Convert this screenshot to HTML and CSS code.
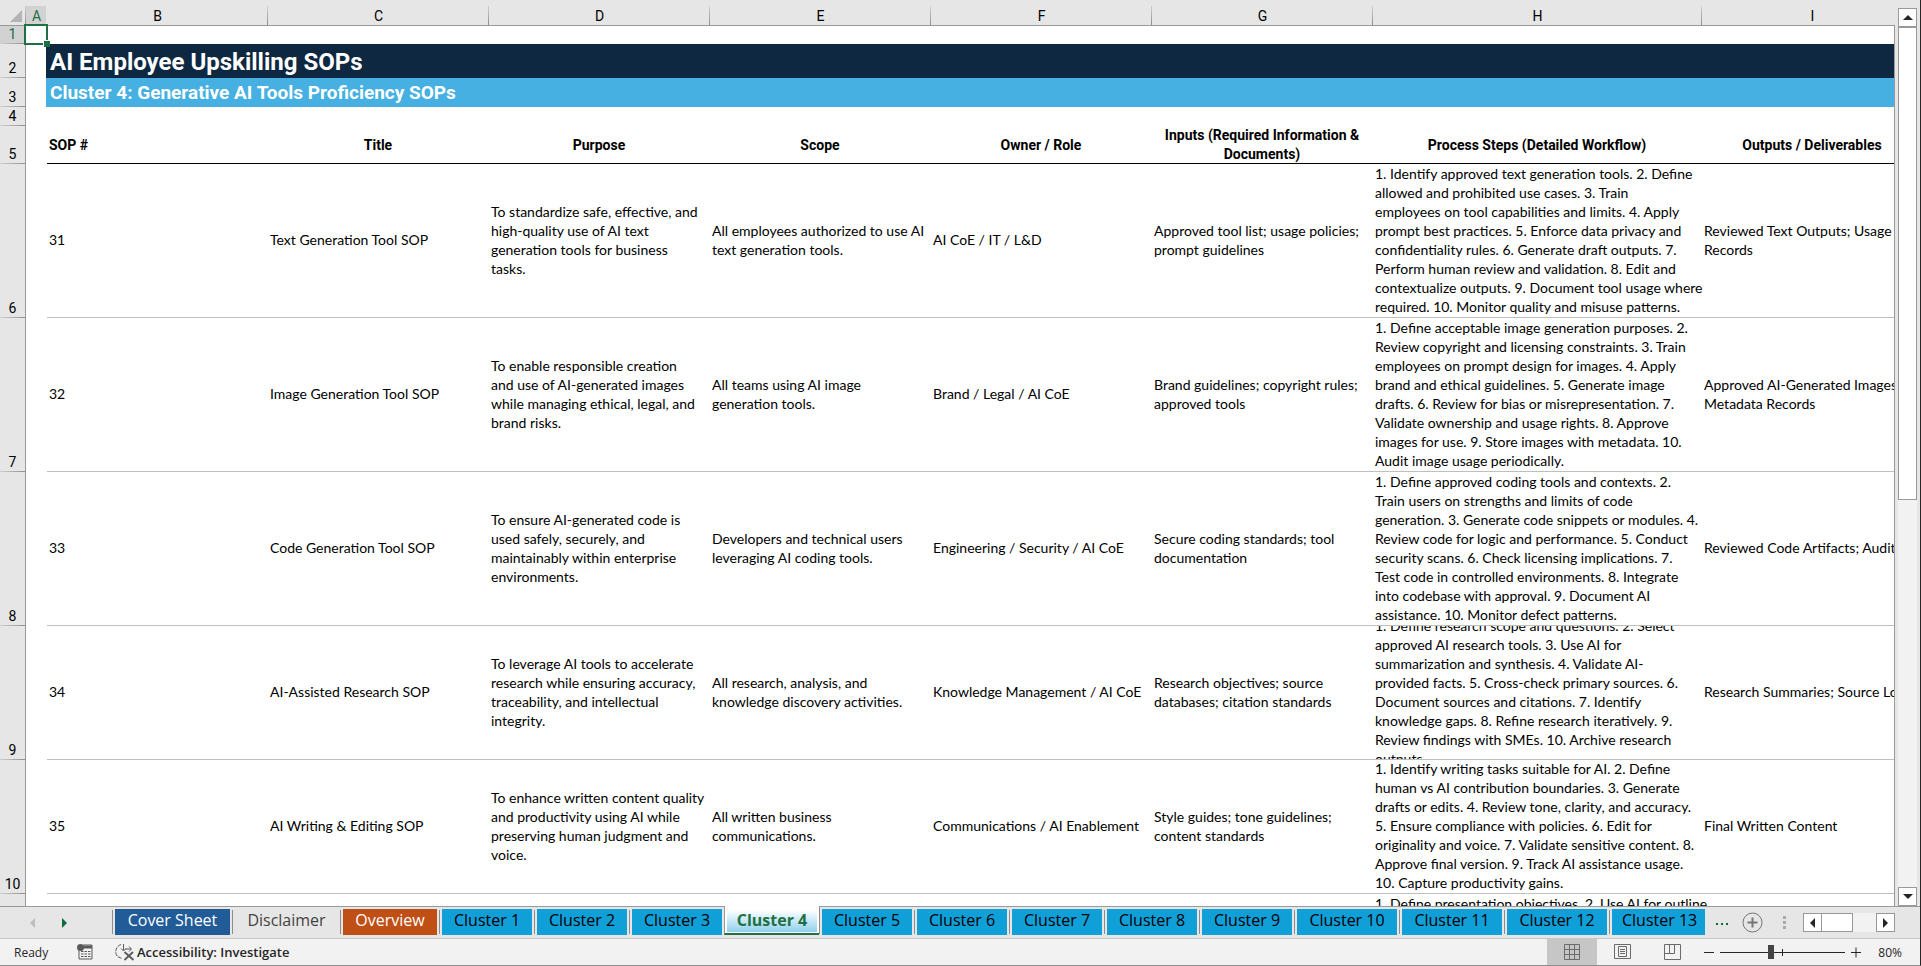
FILE: index.html
```html
<!DOCTYPE html>
<html lang="en">

<head>
    <meta charset="UTF-8">
    <meta name="viewport" content="width=device-width, initial-scale=1.0">
    <title>AI Employee Upskilling SOPs</title>

    <link rel="stylesheet" href="styles.css">
</head>

<body>
    <div class="workbook">
        <div class="main">
            <div class="sheet">
                <table class="grid">
                    <colgroup>
                        <col class="col-num">
                        <col class="col-a">
                        <col class="col-std">
                        <col class="col-std">
                        <col class="col-std">
                        <col class="col-std">
                        <col class="col-std">
                        <col class="col-std">
                        <col class="col-steps">
                        <col class="col-std">
                    </colgroup>
                    <thead>
                        <tr class="letters">
                            <th class="corner"><svg width="12" height="12" viewBox="0 0 12 12"><path d="M12 0v12H0z" fill="#b4b4b4"/></svg></th>
                            <th class="selected">A</th>
                            <th>B</th>
                            <th>C</th>
                            <th>D</th>
                            <th>E</th>
                            <th>F</th>
                            <th>G</th>
                            <th>H</th>
                            <th>I</th>
                        </tr>
                    </thead>
                    <tbody>
                        <tr class="row-1">
                            <th class="selected">1</th>
                            <td class="active-cell"></td>
                            <td colspan="8"></td>
                        </tr>
                        <tr class="row-title">
                            <th>2</th>
                            <td></td>
                            <td colspan="8">AI Employee Upskilling SOPs</td>
                        </tr>
                        <tr class="row-subtitle">
                            <th>3</th>
                            <td></td>
                            <td colspan="8">Cluster 4: Generative AI Tools Proficiency SOPs</td>
                        </tr>
                        <tr class="row-blank">
                            <th>4</th>
                            <td></td>
                            <td colspan="8"></td>
                        </tr>
                        <tr class="row-head">
                            <th>5</th>
                            <td></td>
                            <td class="first">SOP #</td>
                            <td>Title</td>
                            <td>Purpose</td>
                            <td>Scope</td>
                            <td>Owner / Role</td>
                            <td>Inputs (Required Information &amp;<br>Documents)</td>
                            <td>Process Steps (Detailed Workflow)</td>
                            <td>Outputs / Deliverables</td>
                        </tr>
                        <tr class="row-data tall">
                            <th>6</th>
                            <td></td>
                            <td><div class="cell">31</div></td>
                            <td><div class="cell">Text Generation Tool SOP</div></td>
                            <td><div class="cell">To standardize safe, effective, and<br>high-quality use of AI text<br>generation tools for business<br>tasks.</div></td>
                            <td><div class="cell">All employees authorized to use AI<br>text generation tools.</div></td>
                            <td><div class="cell">AI CoE / IT / L&amp;D</div></td>
                            <td><div class="cell">Approved tool list; usage policies;<br>prompt guidelines</div></td>
                            <td><div class="cell">1. Identify approved text generation tools. 2. Define<br>allowed and prohibited use cases. 3. Train<br>employees on tool capabilities and limits. 4. Apply<br>prompt best practices. 5. Enforce data privacy and<br>confidentiality rules. 6. Generate draft outputs. 7.<br>Perform human review and validation. 8. Edit and<br>contextualize outputs. 9. Document tool usage where<br>required. 10. Monitor quality and misuse patterns.</div></td>
                            <td><div class="cell">Reviewed Text Outputs; Usage<br>Records</div></td>
                        </tr>
                        <tr class="row-data tall">
                            <th>7</th>
                            <td></td>
                            <td><div class="cell">32</div></td>
                            <td><div class="cell">Image Generation Tool SOP</div></td>
                            <td><div class="cell">To enable responsible creation<br>and use of AI-generated images<br>while managing ethical, legal, and<br>brand risks.</div></td>
                            <td><div class="cell">All teams using AI image<br>generation tools.</div></td>
                            <td><div class="cell">Brand / Legal / AI CoE</div></td>
                            <td><div class="cell">Brand guidelines; copyright rules;<br>approved tools</div></td>
                            <td><div class="cell">1. Define acceptable image generation purposes. 2.<br>Review copyright and licensing constraints. 3. Train<br>employees on prompt design for images. 4. Apply<br>brand and ethical guidelines. 5. Generate image<br>drafts. 6. Review for bias or misrepresentation. 7.<br>Validate ownership and usage rights. 8. Approve<br>images for use. 9. Store images with metadata. 10.<br>Audit image usage periodically.</div></td>
                            <td><div class="cell">Approved AI-Generated Images;<br>Metadata Records</div></td>
                        </tr>
                        <tr class="row-data tall">
                            <th>8</th>
                            <td></td>
                            <td><div class="cell">33</div></td>
                            <td><div class="cell">Code Generation Tool SOP</div></td>
                            <td><div class="cell">To ensure AI-generated code is<br>used safely, securely, and<br>maintainably within enterprise<br>environments.</div></td>
                            <td><div class="cell">Developers and technical users<br>leveraging AI coding tools.</div></td>
                            <td><div class="cell">Engineering / Security / AI CoE</div></td>
                            <td><div class="cell">Secure coding standards; tool<br>documentation</div></td>
                            <td><div class="cell">1. Define approved coding tools and contexts. 2.<br>Train users on strengths and limits of code<br>generation. 3. Generate code snippets or modules. 4.<br>Review code for logic and performance. 5. Conduct<br>security scans. 6. Check licensing implications. 7.<br>Test code in controlled environments. 8. Integrate<br>into codebase with approval. 9. Document AI<br>assistance. 10. Monitor defect patterns.</div></td>
                            <td><div class="cell">Reviewed Code Artifacts; Audit Logs</div></td>
                        </tr>
                        <tr class="row-data short">
                            <th>9</th>
                            <td></td>
                            <td><div class="cell">34</div></td>
                            <td><div class="cell">AI-Assisted Research SOP</div></td>
                            <td><div class="cell">To leverage AI tools to accelerate<br>research while ensuring accuracy,<br>traceability, and intellectual<br>integrity.</div></td>
                            <td><div class="cell">All research, analysis, and<br>knowledge discovery activities.</div></td>
                            <td><div class="cell">Knowledge Management / AI CoE</div></td>
                            <td><div class="cell">Research objectives; source<br>databases; citation standards</div></td>
                            <td><div class="cell">1. Define research scope and questions. 2. Select<br>approved AI research tools. 3. Use AI for<br>summarization and synthesis. 4. Validate AI-<br>provided facts. 5. Cross-check primary sources. 6.<br>Document sources and citations. 7. Identify<br>knowledge gaps. 8. Refine research iteratively. 9.<br>Review findings with SMEs. 10. Archive research<br>outputs.</div></td>
                            <td><div class="cell">Research Summaries; Source Logs</div></td>
                        </tr>
                        <tr class="row-data short">
                            <th>10</th>
                            <td></td>
                            <td><div class="cell">35</div></td>
                            <td><div class="cell">AI Writing &amp; Editing SOP</div></td>
                            <td><div class="cell">To enhance written content quality<br>and productivity using AI while<br>preserving human judgment and<br>voice.</div></td>
                            <td><div class="cell">All written business<br>communications.</div></td>
                            <td><div class="cell">Communications / AI Enablement</div></td>
                            <td><div class="cell">Style guides; tone guidelines;<br>content standards</div></td>
                            <td><div class="cell">1. Identify writing tasks suitable for AI. 2. Define<br>human vs AI contribution boundaries. 3. Generate<br>drafts or edits. 4. Review tone, clarity, and accuracy.<br>5. Ensure compliance with policies. 6. Edit for<br>originality and voice. 7. Validate sensitive content. 8.<br>Approve final version. 9. Track AI assistance usage.<br>10. Capture productivity gains.</div></td>
                            <td><div class="cell">Final Written Content</div></td>
                        </tr>
                        <tr class="row-data next">
                            <th></th>
                            <td></td>
                            <td></td>
                            <td></td>
                            <td></td>
                            <td></td>
                            <td></td>
                            <td></td>
                            <td><div class="cell">1. Define presentation objectives. 2. Use AI for outline</div></td>
                            <td></td>
                        </tr>
                    </tbody>
                </table>
            </div>

            <div class="vscroll">
                <button class="scroll-btn" aria-label="Scroll up"><svg width="10" height="6" viewBox="0 0 10 6"><path d="M5 0l5 5H0z" fill="#262626"/></svg></button>
                <div class="vtrack"><div class="vthumb"></div></div>
                <button class="scroll-btn" aria-label="Scroll down"><svg width="10" height="6" viewBox="0 0 10 6"><path d="M0 0h10L5 5z" fill="#262626"/></svg></button>
            </div>
        </div>

        <div class="tabbar">
            <div class="tab-nav">
                <button aria-label="Previous sheets"><svg width="5" height="10" viewBox="0 0 5 10"><path d="M5 0v10L0 5z" fill="#bdbdbd"/></svg></button>
                <button aria-label="Next sheets"><svg width="5" height="10" viewBox="0 0 5 10"><path d="M0 0v10l5-5z" fill="#0b6b3a"/></svg></button>
            </div>
            <ul class="tabs">
                <li><button class="tab cover">Cover Sheet</button></li>
                <li><button class="tab plain">Disclaimer</button></li>
                <li><button class="tab overview">Overview</button></li>
                <li><button class="tab">Cluster 1</button></li>
                <li><button class="tab">Cluster 2</button></li>
                <li><button class="tab">Cluster 3</button></li>
                <li class="current"><button class="tab">Cluster 4</button></li>
                <li class="after"><button class="tab">Cluster 5</button></li>
                <li><button class="tab">Cluster 6</button></li>
                <li><button class="tab">Cluster 7</button></li>
                <li><button class="tab">Cluster 8</button></li>
                <li><button class="tab">Cluster 9</button></li>
                <li><button class="tab wide">Cluster 10</button></li>
                <li><button class="tab wide">Cluster 11</button></li>
                <li><button class="tab wide">Cluster 12</button></li>
                <li><button class="tab cut">Cluster 13</button></li>
            </ul>
            <button class="more" aria-label="More sheets"><svg width="13" height="3" viewBox="0 0 13 3"><path d="M0 0h2v2H0zM5 0h2v2H5zM10 0h2v2h-2z" fill="#0b6b3a"/></svg></button>
            <button class="add" aria-label="New sheet"><svg width="21" height="21" viewBox="0 0 21 21" fill="none"><circle cx="10.500" cy="10.500" r="9.500" stroke="#767676"/><path d="M10.500 5.500v10M5.500 10.500h10" stroke="#767676" stroke-width="2"/></svg></button>
            <svg class="grip" width="3" height="13" viewBox="0 0 3 13"><path d="M0 0h3v3H0zM0 5h3v3H0zM0 10h3v3H0z" fill="#ababab"/></svg>
            <div class="hscroll">
                <button class="scroll-btn" aria-label="Scroll left"><svg width="5" height="10" viewBox="0 0 5 10"><path d="M5 0v10L0 5z" fill="#262626"/></svg></button>
                <div class="htrack"><div class="hthumb"></div></div>
                <button class="scroll-btn" aria-label="Scroll right"><svg width="5" height="10" viewBox="0 0 5 10"><path d="M0 0v10l5-5z" fill="#262626"/></svg></button>
            </div>
        </div>

        <div class="statusbar">
            <span class="ready">Ready</span>
            <button class="macro" aria-label="Record macro">
                <svg width="16" height="16" viewBox="0 0 16 16"><path d="M6 1h9v14H2V6" fill="none" stroke="#5a5a5a"/><path d="M5 1.500h10v3H5z" fill="#5a5a5a"/><path d="M4 7.500h2.500M7.500 7.500H10M11 7.500h2.500M4 10h2.500M7.500 10H10M11 10h2.500M4 12.500h2.500M7.500 12.500H10M11 12.500h2.500" stroke="#5a5a5a"/><circle cx="3.500" cy="3.500" r="3.500" fill="#5a5a5a"/></svg>
            </button>
            <button class="access">
                <svg width="20" height="18" viewBox="0 0 20 18" fill="none" stroke="#5a5a5a"><path d="M6 1.500A7.500 7.500 0 0 0 2.500 13.500L7 15.500" stroke-dasharray="4 1"/><path d="M8.500 1v6M6 5.500l2.500 2.500L11 5.500M10 6h6M14 3.500L16.500 6 14 8.500"/><path d="M9.500 9l9 8M18 9l-8.500 8" stroke-width="1.800"/></svg>
                Accessibility: Investigate
            </button>
            <div class="views">
                <button class="on" aria-label="Normal"><svg width="17" height="17" viewBox="0 0 17 17" fill="none" stroke="#6a6a6a"><path d="M.5 .5h15v15H.5zM.5 5.500h15M.5 10.500h15M5.500 .5v15M10.500 .5v15"/></svg></button>
                <button aria-label="Page Layout"><svg width="17" height="17" viewBox="0 0 17 17" fill="none" stroke="#6a6a6a"><path d="M.5 .5h16v14H.5zM4.500 2.500h8v10h-8zM6 5.500h5M6 7.500h5M6 9.500h5"/></svg></button>
                <button aria-label="Page Break Preview"><svg width="17" height="17" viewBox="0 0 17 17" fill="none" stroke="#6a6a6a"><path d="M.5 .5h16v15H.5zM5.500 .5v9M10.500 .5v9M.5 9.500h10"/></svg></button>
            </div>
            <div class="zoom">
                <button aria-label="Zoom out"><svg width="10" height="11" viewBox="0 0 10 11"><path d="M0 5h10v1H0z" fill="#262626"/></svg></button>
                <input type="range" min="0" max="100" value="40" aria-label="Zoom">
                <button aria-label="Zoom in"><svg width="11" height="11" viewBox="0 0 11 11"><path d="M0 5h10v1H0zM4.500 .5h1v10h-1z" fill="#262626"/></svg></button>
                <button class="percent">80%</button>
            </div>
        </div>
    </div>
</body>

</html>
```
FILE: styles.css
```css
* {
    box-sizing: border-box;
}

body {
    margin: 0;
    background-color: #e6e6e6;
    font-family: Roboto, "Liberation Sans", sans-serif;
    font-size: 14px;
    color: #000;
}

button {
    margin: 0;
    padding: 0;
    border: none;
    background: none;
    font-family: inherit;
    color: inherit;
    display: flex;
    align-items: center;
    justify-content: center;
    cursor: pointer;
}

svg {
    display: block;
    flex: none;
}

.workbook {
    height: 100vh;
    display: flex;
    flex-direction: column;
    border-right: 1px solid #262626;
    border-bottom: 1px solid #8d8d8d;
}

.main {
    flex: 1;
    min-height: 0;
    display: flex;
}

.sheet {
    flex: 1;
    min-width: 0;
    overflow: hidden;
    background: linear-gradient(#e6e6e6 25px, #fff 25px);
    position: relative;
}

/* right edge of the cell area, starts below the letters */
.sheet::after {
    content: "";
    position: absolute;
    top: 25px;
    right: 0;
    bottom: 0;
    width: 1px;
    background-color: #999;
}

/* ---- grid ---- */

.grid {
    table-layout: fixed;
    width: 1923px;
    border-collapse: separate;
    border-spacing: 0;
    line-height: 19px;
}

.col-num {
    width: 26px;
}

.col-a {
    width: 21px;
}

.col-std {
    width: 221px;
}

.col-steps {
    width: 329px;
}

.grid th,
.grid td {
    padding: 0;
    white-space: nowrap;
    text-align: left;
}

.letters th {
    height: 26px;
    background: linear-gradient(#d0d0d0, #8d8d8d) right 0 top 6px / 1px 19px no-repeat #e6e6e6;
    border-bottom: 1px solid #999;
    font-size: 14px;
    font-weight: normal;
    line-height: 17px;
}

.grid .letters th {
    padding-top: 8px;
    text-align: center;
}

.grid .letters .corner {
    padding: 6px 0 0 10px;
}

.letters .selected {
    background: linear-gradient(#d2d2d2, #d2d2d2) left 0 top 6px / 20px 19px no-repeat #e6e6e6;
    color: #1e6b45;
}

.grid tbody th {
    padding-bottom: 1px;
    background: linear-gradient(to right, #d0d0d0, #8d8d8d) left bottom / 25px 1px no-repeat #e6e6e6;
    border-right: 1px solid #999;
    font-size: 14px;
    font-weight: normal;
    line-height: 17px;
    text-align: center;
    vertical-align: bottom;
}

.grid tbody .selected {
    background-color: #d2d2d2;
    color: #1e6b45;
}

.active-cell {
    position: relative;
}

.active-cell::before {
    content: "";
    position: absolute;
    top: -2px;
    left: -2px;
    right: -1px;
    bottom: -1px;
    border: 2px solid #1e7145;
}

.active-cell::after {
    content: "";
    position: absolute;
    right: -3px;
    bottom: -3px;
    width: 6px;
    height: 6px;
    border: solid #fff;
    border-width: 1px 0 0 1px;
    background-color: #1e7145;
}

.row-1 th {
    height: 18px;
}

.row-title th {
    height: 34px;
}

.grid .row-title td:last-child {
    padding: 2px 0 0 3px;
    background-color: #0f2841;
    box-shadow: -1px 0 #0f2841;
    color: #fff;
    font-size: 24px;
    font-weight: bold;
}

.row-subtitle th {
    height: 29px;
}

.grid .row-subtitle td:last-child {
    padding-left: 3px;
    background-color: #45b0e1;
    box-shadow: -1px 0 #45b0e1;
    color: #fff;
    font-size: 19px;
    font-weight: bold;
}

.row-blank th {
    height: 19px;
}

.row-head th {
    height: 38px;
}

.grid .row-head td {
    padding-right: 1px;
    font-weight: bold;
    text-align: center;
}

.row-head td + td {
    box-shadow: inset 0 -1px #000;
}

.grid .row-head .first {
    padding-left: 2px;
    text-align: left;
}

.row-data td + td {
    border-bottom: 1px solid #bfbfbf;
}

/* long text is clipped at the row's edges only */
.cell {
    display: flex;
    align-items: center;
    padding: 0 0 2px 2px;
    overflow-x: visible;
    overflow-y: clip;
    font-family: Lato, Roboto, sans-serif;
}

.tall .cell {
    height: 153px;
}

.short .cell {
    height: 133px;
}

/* only the top of this row is in view */
.next .cell {
    height: 20px;
}

/* ---- scroll bars ---- */

.vscroll {
    width: 25px;
    padding: 8px 3px 0;
    display: flex;
    flex-direction: column;
}

.scroll-btn {
    width: 19px;
    height: 19px;
    background-color: #fff;
    border: 1px solid #999;
    flex: none;
}

.vtrack {
    flex: 1;
    background-color: #f2f2f2;
}

.vthumb {
    height: 55%;
    background-color: #fff;
    border: 1px solid #999;
}

.hscroll {
    display: flex;
    width: 92px;
    margin-right: 25px;
}

.htrack {
    flex: 1;
    background-color: #f2f2f2;
}

.hthumb {
    width: 31px;
    height: 19px;
    background-color: #fff;
    border: 1px solid #999;
    border-left: none;
}

/* ---- sheet tabs ---- */

.tabbar {
    height: 33px;
    display: flex;
    align-items: center;
    border-top: 1px solid #999;
    border-bottom: 1px solid #c6c6c6;
}

.tab-nav {
    width: 112px;
    padding-left: 30px;
    display: flex;
    gap: 27px;
}

.tabs {
    margin: 0;
    padding: 0;
    list-style: none;
    display: flex;
    align-self: stretch;
}

.tabs li {
    padding: 2px 2px 0 3px;
    background: linear-gradient(#8d8d8d, #8d8d8d) left 0 top 3px / 1px 24px no-repeat;
}

.tab {
    width: 90px;
    height: 26px;
    padding-bottom: 5px;
    background-color: #119fd8;
    font-family: "Open Sans", "Noto Sans", sans-serif;
    font-size: 16px;
    white-space: nowrap;
    overflow: hidden;
}

.cover {
    width: 115px;
    background-color: #215c98;
    color: #fff;
}

.plain {
    width: 103px;
    background: none;
    color: #444;
}

.overview {
    width: 94px;
    background-color: #c04f15;
    color: #fff;
}

.wide {
    width: 100px;
}

.cut {
    width: 93px;
    padding-left: 10px;
    justify-content: flex-start;
}

.tabs .current {
    height: 29px;
    margin-top: -1px;
    padding: 4px 2px 0;
    background: #fff;
    border-left: 1px solid #999;
    border-bottom: 2px solid #1e7145;
}

.current .tab {
    height: 22px;
    padding-bottom: 3px;
    background: linear-gradient(#fff, #8fd0ec);
    color: #1e7145;
    font-weight: bold;
}

.tabs .after {
    background: linear-gradient(#8d8d8d, #8d8d8d) left 0 top 0 / 1px 27px no-repeat;
}

.more {
    margin-left: 9px;
    padding-top: 4px;
}

.add {
    margin-left: 13px;
}

.grip {
    margin-left: auto;
    margin-right: 17px;
}

/* ---- status bar ---- */

.statusbar {
    height: 26px;
    display: flex;
    align-items: center;
    background-color: #f2f2f2;
    font-family: "Open Sans", "Noto Sans", sans-serif;
    font-size: 12px;
    color: #262626;
}

.statusbar button {
    font-size: 12px;
}

.ready {
    width: 63px;
    margin-left: 14px;
}

.statusbar .access {
    gap: 2px;
    margin-left: 22px;
    font-size: 13px;
    font-weight: 600;
}

.views {
    margin-left: auto;
    align-self: stretch;
    display: flex;
}

.views button {
    width: 50px;
}

.views .on {
    background-color: #c6c6c6;
}

.zoom {
    display: flex;
    align-items: center;
    margin-left: 7px;
    padding-right: 18px;
}

.zoom input {
    appearance: none;
    width: 125px;
    height: 15px;
    margin: 0 6px;
    background:
        linear-gradient(#262626, #262626) 62px 4px / 1px 7px no-repeat,
        linear-gradient(#262626, #262626) 0 7px / 100% 1px no-repeat;
}

.zoom input::-webkit-slider-thumb {
    appearance: none;
    width: 6px;
    height: 14px;
    background-color: #444;
}

.zoom .percent {
    margin-left: 16px;
}
```
